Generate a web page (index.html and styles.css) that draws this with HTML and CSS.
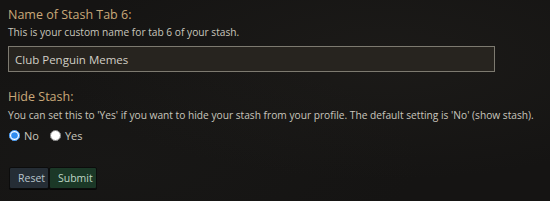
FILE: index.html
```html
<!DOCTYPE html>
<html lang="en">
<head>
    <meta charset="UTF-8">
    <title>Stash Tab Settings</title>
    <link rel="stylesheet" href="styles.css">
</head>
<body>
    <form class="settings">
        <div class="field">
            <label for="tabName">Name of Stash Tab 6:</label>
            <p class="hint">This is your custom name for tab 6 of your stash.</p>
            <input type="text" id="tabName" value="Club Penguin Memes">
        </div>

        <div class="field">
            <label>Hide Stash:</label>
            <p class="hint">You can set this to 'Yes' if you want to hide your stash from your profile. The default setting is 'No' (show stash).</p>
            <div class="radios">
                <label class="radio"><input type="radio" name="hide" value="no" checked> No</label>
                <label class="radio"><input type="radio" name="hide" value="yes"> Yes</label>
            </div>
        </div>

        <div class="buttons">
            <button type="reset" class="btn btn-reset">Reset</button>
            <button type="submit" class="btn btn-submit">Submit</button>
        </div>
    </form>
</body>
</html>
```

FILE: styles.css
```css
body {
    margin: 0;
    padding: 0 8px;
    font-family: "Open Sans", "DejaVu Sans", sans-serif;
    background-color: #151413;
    background-image:
        radial-gradient(ellipse at 70% 30%, rgba(40, 38, 34, 0.35), transparent 60%),
        radial-gradient(ellipse at 20% 80%, rgba(30, 30, 28, 0.3), transparent 50%);
    height: 201px;
    overflow: hidden;
    color: #c9c6bd;
}
.settings {
    padding-top: 6px;
}
.field > label {
    display: block;
    font-size: 12.5px;
    line-height: 17px;
    color: #c9a979;
}
.hint {
    margin: 2px 0 0;
    font-size: 10.2px;
    line-height: 15px;
    white-space: nowrap;
    color: #c9c6bd;
}
.field input[type="text"] {
    display: block;
    box-sizing: border-box;
    width: 487px;
    height: 26px;
    margin: 6px 0 0;
    padding: 0 6px;
    background-color: #27241f;
    border: 1px solid #7d7a70;
    color: #d2cfc6;
    font-family: inherit;
    font-size: 11.5px;
}
.field + .field {
    margin-top: 16px;
}
.field + .field .hint {
    margin-top: 3px;
}
.radios {
    display: flex;
    gap: 10px;
    margin-top: 5px;
}
.radio {
    display: flex;
    align-items: center;
    height: 15px;
    font-size: 11px;
    color: #c9c6bd;
}
.radio input {
    margin: 0 4px 0 1px;
    width: 11px;
    height: 11px;
    accent-color: #2f8cf0;
}
.buttons {
    display: flex;
    margin-top: 24px;
    padding-left: 1px;
}
.btn {
    height: 22px;
    padding: 0 8px;
    border: 1px solid #0c0c0c;
    border-radius: 2px;
    box-shadow: 0 1px 0 #080808;
    font-family: inherit;
    font-size: 10.5px;
    cursor: pointer;
}
.btn-reset {
    width: 40px;
    background-color: #252d35;
    color: #b8c4cc;
}
.btn-submit {
    width: 48px;
    background-color: #1b3827;
    color: #bcd6c4;
}
```
